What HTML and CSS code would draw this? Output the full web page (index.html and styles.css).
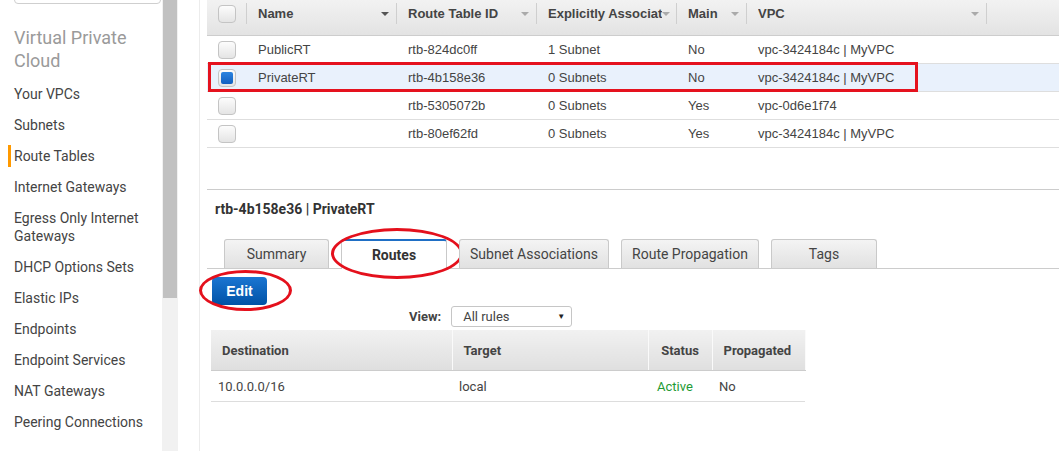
FILE: index.html
```html
<!DOCTYPE html>
<html lang="en">
<head>
    <meta charset="UTF-8">
    <title>Route Tables</title>
    <link rel="stylesheet" href="styles.css">
</head>
<body>
    <div class="sidebar">
        <div class="search"></div>
        <h2>Virtual Private Cloud</h2>
        <ul class="nav">
            <li>Your VPCs</li>
            <li>Subnets</li>
            <li class="active">Route Tables</li>
            <li>Internet Gateways</li>
            <li>Egress Only Internet Gateways</li>
            <li>DHCP Options Sets</li>
            <li>Elastic IPs</li>
            <li>Endpoints</li>
            <li>Endpoint Services</li>
            <li>NAT Gateways</li>
            <li>Peering Connections</li>
        </ul>
    </div>
    <div class="scrollbar"><div class="thumb"></div></div>
    <div class="gutter"></div>

    <div class="main">
        <div class="grid-wrap">
            <table class="grid">
                <colgroup>
                    <col style="width:40px"><col style="width:150px"><col style="width:140px">
                    <col style="width:140px"><col style="width:70px"><col style="width:240px"><col>
                </colgroup>
                <thead>
                    <tr>
                        <th><div class="hd"><span class="cb"></span></div></th>
                        <th><div class="hd"><span class="lbl">Name</span><span class="arrow dark"></span></div></th>
                        <th><div class="hd"><span class="lbl">Route Table ID</span><span class="arrow"></span></div></th>
                        <th><div class="hd"><span class="lbl">Explicitly Associated With</span><span class="arrow tight"></span></div></th>
                        <th><div class="hd"><span class="lbl">Main</span><span class="arrow"></span></div></th>
                        <th><div class="hd"><span class="lbl">VPC</span><span class="arrow"></span></div></th>
                        <th><div class="hd last"></div></th>
                    </tr>
                </thead>
                <tbody>
                    <tr>
                        <td><span class="cb"></span></td>
                        <td>PublicRT</td><td>rtb-824dc0ff</td><td>1 Subnet</td><td>No</td><td>vpc-3424184c | MyVPC</td><td></td>
                    </tr>
                    <tr class="selected">
                        <td><span class="cb on"></span></td>
                        <td>PrivateRT</td><td>rtb-4b158e36</td><td>0 Subnets</td><td>No</td><td>vpc-3424184c | MyVPC</td><td></td>
                    </tr>
                    <tr>
                        <td><span class="cb"></span></td>
                        <td></td><td>rtb-5305072b</td><td>0 Subnets</td><td>Yes</td><td>vpc-0d6e1f74</td><td></td>
                    </tr>
                    <tr>
                        <td><span class="cb"></span></td>
                        <td></td><td>rtb-80ef62fd</td><td>0 Subnets</td><td>Yes</td><td>vpc-3424184c | MyVPC</td><td></td>
                    </tr>
                </tbody>
            </table>
            <div class="row-mark"></div>
        </div>

        <div class="detail">
            <h3>rtb-4b158e36 | PrivateRT</h3>
            <div class="tabs">
                <div class="tab" style="width:105px">Summary</div>
                <div class="tab active" style="width:106px">Routes<span class="ring tab-ring"></span></div>
                <div class="tab" style="width:150px">Subnet Associations</div>
                <div class="tab" style="width:138px">Route Propagation</div>
                <div class="tab" style="width:106px">Tags</div>
            </div>

            <button class="edit">Edit<span class="ring edit-ring"></span></button>

            <div class="view">
                <label>View:</label>
                <div class="select">All rules<span class="caret">&#9660;</span></div>
            </div>

            <table class="routes">
                <colgroup>
                    <col style="width:241px"><col style="width:196px"><col style="width:64px"><col style="width:93px">
                </colgroup>
                <thead>
                    <tr>
                        <th>Destination</th>
                        <th>Target</th>
                        <th class="center">Status</th>
                        <th>Propagated</th>
                    </tr>
                </thead>
                <tbody>
                    <tr>
                        <td>10.0.0.0/16</td>
                        <td>local</td>
                        <td class="ok">Active</td>
                        <td>No</td>
                    </tr>
                </tbody>
            </table>
        </div>
    </div>
</body>
</html>
```

FILE: styles.css
```css
body {
    margin: 0;
    height: 451px;
    overflow: hidden;
    display: flex;
    background: white;
    font-family: "Liberation Sans", Arial, sans-serif;
    color: #444;
}

/* left navigation */
.sidebar {
    width: 148px;
    flex: none;
    padding-left: 14px;
    font-family: Roboto, "Liberation Sans", sans-serif;
}
.search {
    height: 22px;
    margin-top: -20px;
    width: 145px;
    border: 1px solid #cfcfcf;
    border-radius: 4px;
}
.sidebar h2 {
    margin: 22px 0 6px;
    font-size: 18px;
    line-height: 23px;
    font-weight: normal;
    color: #9a9a9a;
}
.nav {
    list-style: none;
    margin: 0;
    padding: 0;
}
.nav li {
    font-size: 14px;
    line-height: 18px;
    padding: 6.5px 0 6.5px 10px;
    margin-left: -10px;
    color: #444;
}
.nav li.active {
    background: linear-gradient(#f90, #f90) no-repeat 4px center / 3px 22px;
}
.scrollbar {
    width: 16px;
    flex: none;
    background: #f1f1f1;
}
.thumb {
    width: 14px;
    height: 298px;
    margin-left: 1px;
    background: #c1c1c1;
}
.gutter {
    width: 21px;
    flex: none;
    border-right: 1px solid #ececec;
}

/* main area */
.main {
    flex: 1;
    padding-left: 7px;
    min-width: 0;
}
.grid-wrap {
    position: relative;
    width: 852px;
}
.grid {
    width: 852px;
    table-layout: fixed;
    border-collapse: collapse;
    font-size: 13px;
}
.grid th {
    height: 35px;
    padding: 0;
    vertical-align: top;
    background: linear-gradient(#f2f2f2, #e3e3e3);
    border-bottom: 1px solid #cdcdcd;
    text-align: left;
    font-weight: bold;
    color: #444;
}
.hd {
    display: flex;
    align-items: center;
    height: 21px;
    margin-top: 3px;
    padding-left: 11px;
    border-right: 1px solid #cfcfcf;
    box-shadow: 1px 0 0 #fafafa;
}
.hd.last {
    border-right: none;
    box-shadow: none;
}
.hd .lbl {
    flex: 1;
    overflow: hidden;
    white-space: nowrap;
}
.arrow {
    flex: none;
    width: 0;
    height: 0;
    margin: 0 7px 0 4px;
    border-left: 4px solid transparent;
    border-right: 4px solid transparent;
    border-top: 4px solid #aaa;
}
.arrow.dark {
    border-top-color: #555;
}
.arrow.tight {
    margin-left: 0;
    margin-right: 6px;
}
.grid td {
    height: 27px;
    padding: 0 0 0 11px;
    border-bottom: 1px solid #dedede;
    white-space: nowrap;
    overflow: hidden;
}
.grid tr.selected td {
    background: #e9f1fc;
}
.cb {
    display: block;
    width: 16px;
    height: 16px;
    border: 1px solid #c4c4c4;
    border-radius: 4px;
    background: linear-gradient(#fcfcfc, #e4e4e4);
    position: relative;
}
.cb.on::after {
    content: "";
    position: absolute;
    left: 2px;
    top: 2px;
    width: 12px;
    height: 12px;
    border-radius: 2px;
    background: linear-gradient(#2c84e0, #125fc0);
}
.row-mark {
    position: absolute;
    left: 1px;
    top: 62px;
    width: 704px;
    height: 24px;
    border: 3px solid #e5121e;
}

/* detail panel */
.detail {
    margin-top: 41px;
    border-top: 1px solid #cccccc;
    font-family: Roboto, "Liberation Sans", sans-serif;
}
.detail h3 {
    margin: 10px 0 0 8px;
    font-size: 14px;
    line-height: 18px;
    color: #333;
}
.tabs {
    display: flex;
    align-items: flex-end;
    gap: 12px;
    margin-top: 21px;
    padding-left: 17px;
    border-bottom: 1px solid #cccccc;
}
.tab {
    position: relative;
    box-sizing: border-box;
    height: 29px;
    line-height: 28px;
    text-align: center;
    font-size: 14px;
    color: #444;
    border: 1px solid #c9c9c9;
    border-bottom: none;
    border-radius: 3px 3px 0 0;
    background: linear-gradient(#f4f4f4, #e1e1e1);
}
.tab.active {
    background: white;
    font-weight: bold;
    color: #333;
    border-top: 2px solid #1f6fc5;
    height: 30px;
    line-height: 29px;
    margin-bottom: -1px;
}
.ring {
    position: absolute;
    border: 3px solid #e4101c;
    border-radius: 50%;
    pointer-events: none;
}
.tab-ring {
    left: -11px;
    top: -13px;
    width: 126px;
    height: 45px;
}
.edit {
    position: relative;
    display: block;
    width: 55px;
    height: 28px;
    margin: 8px 0 0 5px;
    border: none;
    border-radius: 4px;
    background: linear-gradient(#1b76d2, #0052a6);
    color: white;
    font-family: "Liberation Sans", Arial, sans-serif;
    font-size: 14px;
    font-weight: bold;
}
.edit-ring {
    left: -13px;
    top: -7px;
    width: 87px;
    height: 35px;
}
.view {
    display: flex;
    align-items: center;
    gap: 10px;
    margin: 1px 0 0 202px;
    font-size: 13px;
}
.view label {
    font-weight: bold;
    color: #444;
}
.select {
    position: relative;
    width: 108px;
    height: 19px;
    line-height: 19px;
    padding-left: 11px;
    border: 1px solid #c6c6c6;
    border-radius: 3px;
    color: #444;
}
.caret {
    position: absolute;
    right: 6px;
    top: 0;
    font-size: 8px;
    color: #222;
}
.routes {
    margin: 3px 0 0 4px;
    width: 594px;
    table-layout: fixed;
    border-collapse: collapse;
    font-size: 13px;
}
.routes th {
    height: 40px;
    padding: 0 0 0 11px;
    text-align: left;
    font-weight: bold;
    color: #444;
    white-space: nowrap;
    background: linear-gradient(#f1f1f1, #dfdfdf);
    border-right: 1px solid #fafafa;
    border-left: 1px solid #d6d6d6;
    border-bottom: 1px solid #cccccc;
}
.routes th:first-child {
    border-left: none;
}
.routes th.center {
    padding: 0;
    text-align: center;
}
.routes td {
    height: 30px;
    padding: 0 0 0 7px;
    border-bottom: 1px solid #dddddd;
    color: #444;
}
.routes td.ok {
    color: #1e9a34;
    padding-left: 9px;
}
```
